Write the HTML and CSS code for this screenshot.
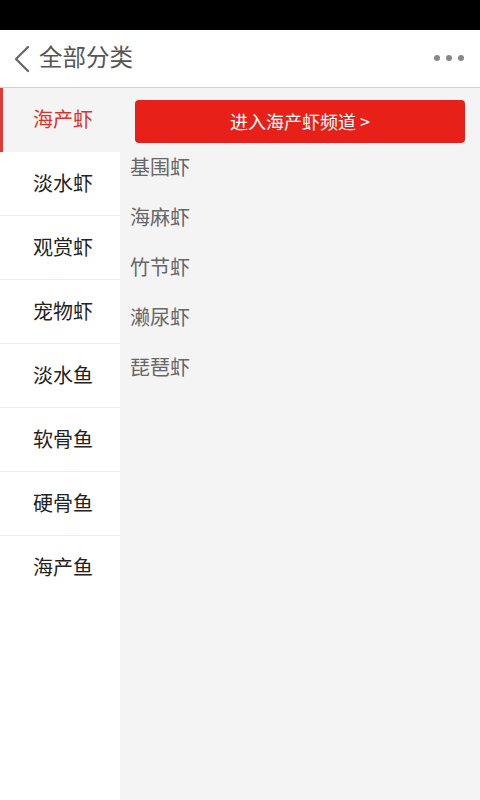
FILE: index.html
```html
<!DOCTYPE html>
<html lang="zh-CN">
<head>
<meta charset="utf-8">
<title>全部分类</title>
<link rel="stylesheet" href="styles.css">
</head>
<body>
<div class="statusbar"></div>
<header class="header">
  <svg class="back" width="20" height="30" viewBox="0 0 20 30">
    <polyline points="15,3 3,15 15,27" fill="none" stroke="#666" stroke-width="2.2" stroke-linecap="round" stroke-linejoin="round"/>
  </svg>
  <span class="title">全部分类</span>
  <div class="more"><i></i><i></i><i></i></div>
</header>
<main class="main">
  <nav class="sidebar">
    <div class="cat active">海产虾</div>
    <div class="cat">淡水虾</div>
    <div class="cat">观赏虾</div>
    <div class="cat">宠物虾</div>
    <div class="cat">淡水鱼</div>
    <div class="cat">软骨鱼</div>
    <div class="cat">硬骨鱼</div>
    <div class="cat last">海产鱼</div>
  </nav>
  <section class="panel">
    <div class="channel-btn">进入海产虾频道 &gt;</div>
    <ul class="sublist">
      <li>基围虾</li>
      <li>海麻虾</li>
      <li>竹节虾</li>
      <li>濑尿虾</li>
      <li>琵琶虾</li>
    </ul>
  </section>
</main>
</body>
</html>
```
FILE: styles.css
```css
* { box-sizing: border-box; }
html, body {
  margin: 0;
  padding: 0;
  height: 100%;
}
body {
  font-family: "Noto Sans CJK SC", "Noto Sans", sans-serif;
  background: #fff;
  display: flex;
  flex-direction: column;
  height: 800px;
  overflow: hidden;
}
.statusbar {
  height: 30px;
  background: #000;
  flex: none;
}
.header {
  height: 58px;
  flex: none;
  background: #fff;
  border-bottom: 1px solid #d2d2d2;
  display: flex;
  align-items: center;
  padding: 0 16px 0 13px;
}
.back {
  display: block;
  margin-right: 6px;
}
.title {
  font-size: 23.5px;
  color: #555;
  flex: 1;
  line-height: 1;
  margin-top: -3px;
}
.more {
  display: flex;
  gap: 6px;
  margin-top: -2px;
}
.more i {
  width: 6px;
  height: 6px;
  border-radius: 50%;
  background: #888;
  display: block;
}
.main {
  flex: 1;
  display: flex;
  min-height: 0;
}
.sidebar {
  width: 120px;
  flex: none;
  background: #fff;
}
.cat {
  height: 64px;
  border-bottom: 1px solid #efefef;
  display: flex;
  align-items: center;
  padding-left: 33px;
  padding-bottom: 3px;
  font-size: 20px;
  color: #222;
}
.cat.last { border-bottom: none; }
.cat.active {
  background: #f4f4f4;
  color: #e0302a;
  border-left: 3px solid #e03a36;
  padding-left: 30px;
  border-bottom: none;
  height: 64px;
}
.panel {
  flex: 1;
  background: #f4f4f4;
  padding: 12px 15px 0 10px;
}
.channel-btn {
  margin-left: 5px;
  height: 43px;
  background: #e8201a;
  border-radius: 4px;
  color: #fff;
  font-size: 18px;
  padding-bottom: 2px;
  display: flex;
  align-items: center;
  justify-content: center;
}
.sublist {
  list-style: none;
  margin: 0;
  padding: 0;
}
.sublist li {
  height: 50px;
  display: flex;
  align-items: center;
  padding-bottom: 3px;
  font-size: 20px;
  color: #666;
}
```
